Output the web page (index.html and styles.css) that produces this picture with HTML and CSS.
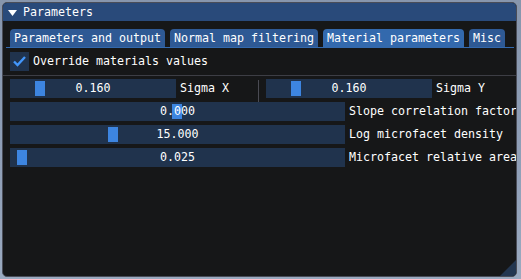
FILE: index.html
```html
<!DOCTYPE html>
<html>
<head>
<meta charset="utf-8">
<link rel="stylesheet" href="styles.css">
</head>
<body>
<div class="window">
  <div class="titlebar">
    <svg class="arrow" width="9" height="6" viewBox="0 0 9 6"><polygon points="0,0 9,0 4.5,6" fill="#fff"/></svg>
    <span class="title">Parameters</span>
  </div>
  <div class="content">
    <div class="tabbar">
      <div class="tab">Parameters and output</div>
      <div class="tab">Normal map filtering</div>
      <div class="tab active">Material parameters</div>
      <div class="tab">Misc</div>
    </div>
    <div class="checkrow">
      <span class="checkbox"><svg width="19" height="19" viewBox="0 0 19 19"><polyline points="4,9.5 7.5,13 15,5" fill="none" stroke="#4296fa" stroke-width="2.4" stroke-linecap="butt" stroke-linejoin="miter"/></svg></span>
      <span class="label">Override materials values</span>
    </div>
    <div class="separator"></div>
    <div class="row first">
      <div class="col col-left">
        <div class="slider half"><span class="grab" style="left:25px"></span><span class="value">0.160</span></div>
        <span class="label">Sigma X</span>
      </div>
      <div class="colline"></div>
      <div class="col col-right">
        <div class="slider half"><span class="grab" style="left:25px"></span><span class="value">0.160</span></div>
        <span class="label">Sigma Y</span>
      </div>
    </div>
    <div class="row">
      <div class="slider wide"><span class="grab" style="left:162px"></span><span class="value">0.000</span></div>
      <span class="label">Slope correlation factor</span>
    </div>
    <div class="row">
      <div class="slider wide"><span class="grab" style="left:98px"></span><span class="value">15.000</span></div>
      <span class="label">Log microfacet density</span>
    </div>
    <div class="row">
      <div class="slider wide"><span class="grab" style="left:7px"></span><span class="value">0.025</span></div>
      <span class="label">Microfacet relative area</span>
    </div>
  </div>
  <div class="grip"></div>
</div>
</body>
</html>
```
FILE: styles.css
```css
* { box-sizing: border-box; }

html, body {
  margin: 0;
  padding: 0;
}

body {
  width: 521px;
  height: 279px;
  overflow: hidden;
  background: linear-gradient(180deg, #8796ad 0%, #90a0b8 60%, #9aaac0 100%);
  font-family: "DejaVu Sans Mono", "Liberation Mono", monospace;
  font-size: 11.63px;
  line-height: 13px;
  color: #ffffff;
  padding: 2px 0 0 2px;
}

.window {
  position: relative;
  width: 515px;
  height: 275px;
  background: #161718;
  border: 1px solid #4a4d58;
  border-radius: 5px;
  overflow: hidden;
  display: flex;
  flex-direction: column;
}

.titlebar {
  flex: none;
  height: 18px;
  background: #294a7a;
  display: flex;
  align-items: center;
  padding-left: 5px;
}

.arrow {
  flex: none;
  margin-top: 1px;
}

.title {
  margin-left: 6px;
  white-space: nowrap;
}

.content {
  padding: 8px 7px 0 7px;
  display: flex;
  flex-direction: column;
}

.tabbar {
  position: relative;
  display: flex;
  gap: 5px;
  height: 19px;
}

.tabbar::after {
  content: "";
  position: absolute;
  left: -4px;
  right: -5px;
  bottom: 0;
  height: 1px;
  background: #3369ad;
}

.tab {
  height: 19px;
  padding: 3px 4px 0 4px;
  background: #2e5994;
  border-radius: 4px 4px 0 0;
  white-space: nowrap;
}

.tab.active {
  background: #3369ad;
}

.checkrow {
  display: flex;
  align-items: center;
  gap: 4px;
  height: 19px;
  margin-top: 4px;
}

.checkbox {
  width: 19px;
  height: 19px;
  background: #20334d;
  display: block;
}

.checkbox svg {
  display: block;
}

.label {
  line-height: 19px;
  padding-left: 4px;
  white-space: nowrap;
}

.checkrow .label {
  padding-left: 0;
}

.separator {
  height: 1px;
  margin: 4px -7px 0 -7px;
  background: #3d3e45;
}

.row {
  display: flex;
  height: 19px;
  margin-top: 4px;
}

.row.first {
  margin-top: 3px;
}

.col {
  display: flex;
  height: 19px;
}

.col-left {
  width: 248px;
}

.colline {
  flex: none;
  width: 1px;
  height: 22px;
  margin-top: 1px;
  background: #4a4b53;
}

.col-right {
  padding-left: 7px;
}

.slider {
  position: relative;
  flex: none;
  height: 19px;
  background: #20334d;
  text-align: center;
  line-height: 19px;
}

.slider.half {
  width: 166px;
}

.slider.wide {
  width: 335px;
}

.grab {
  position: absolute;
  top: 2px;
  width: 10px;
  height: 15px;
  background: #3d85e0;
}

.value {
  position: relative;
  white-space: nowrap;
}

.grip {
  position: absolute;
  right: 0;
  bottom: 0;
  width: 16px;
  height: 16px;
  background: #233650;
  clip-path: polygon(100% 0, 100% 100%, 0 100%);
}
```
